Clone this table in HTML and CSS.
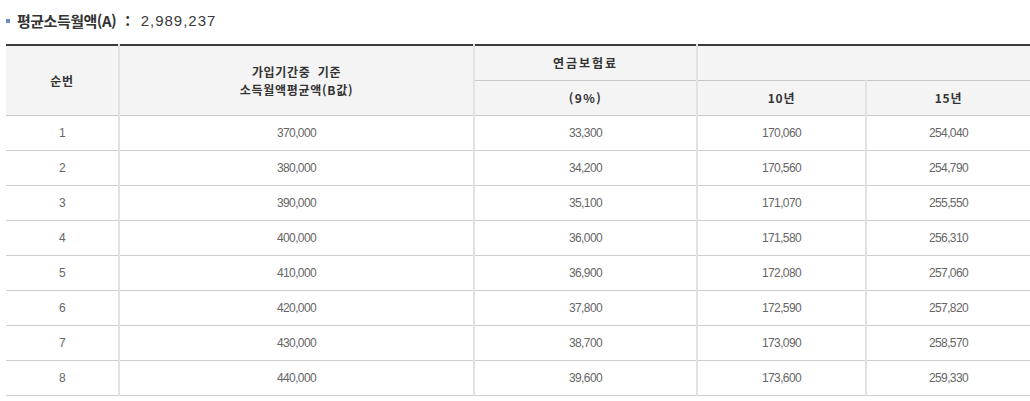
FILE: index.html
```html
<!DOCTYPE html>
<html lang="ko">
<head>
<meta charset="utf-8">
<link rel="stylesheet" href="styles.css">
</head>
<body>
<div class="page">
  <h3 class="title"><span class="bullet"></span><strong>평균소득월액(A)</strong><span class="colon">:</span><span class="value">2,989,237</span></h3>
  <table class="tbl">
    <colgroup>
      <col class="c1"><col class="c2"><col class="c3"><col class="c4"><col class="c5">
    </colgroup>
    <thead>
      <tr>
        <th rowspan="2">순번</th>
        <th rowspan="2"><span class="wide">가입기간중 기준</span><br>소득월액평균액(B값)</th>
        <th class="spaced">연금보험료</th>
        <th colspan="2"></th>
      </tr>
      <tr>
        <th class="sub">(9%)</th>
        <th>10년</th>
        <th>15년</th>
      </tr>
    </thead>
    <tbody>
      <tr><td>1</td><td>370,000</td><td>33,300</td><td>170,060</td><td>254,040</td></tr>
      <tr><td>2</td><td>380,000</td><td>34,200</td><td>170,560</td><td>254,790</td></tr>
      <tr><td>3</td><td>390,000</td><td>35,100</td><td>171,070</td><td>255,550</td></tr>
      <tr><td>4</td><td>400,000</td><td>36,000</td><td>171,580</td><td>256,310</td></tr>
      <tr><td>5</td><td>410,000</td><td>36,900</td><td>172,080</td><td>257,060</td></tr>
      <tr><td>6</td><td>420,000</td><td>37,800</td><td>172,590</td><td>257,820</td></tr>
      <tr><td>7</td><td>430,000</td><td>38,700</td><td>173,090</td><td>258,570</td></tr>
      <tr><td>8</td><td>440,000</td><td>39,600</td><td>173,600</td><td>259,330</td></tr>
    </tbody>
  </table>
</div>
</body>
</html>
```

FILE: styles.css
```css
html, body {
  margin: 0;
  padding: 0;
  background: #fff;
}
.page {
  padding: 0 0 0 6px;
  width: 1024px;
  font-family: "Noto Sans CJK KR", "Liberation Sans", sans-serif;
  color: #333;
}
.title {
  margin: 0;
  height: 44px;
  display: flex;
  align-items: center;
  padding-bottom: 4px;
  box-sizing: border-box;
  font-size: 15px;
  font-weight: normal;
  color: #333;
  letter-spacing: -0.5px;
}
.bullet {
  width: 4px;
  height: 4px;
  background: #6f8dba;
  margin: 1px 7px 0 0;
}
.title strong {
  font-weight: bold;
}
.colon {
  font-weight: bold;
  margin: 0 11px 0 9px;
}
.value {
  font-family: "Liberation Sans", sans-serif;
  letter-spacing: 1px;
  color: #3a3a3a;
}
.tbl {
  width: 1024px;
  border-collapse: collapse;
  table-layout: fixed;
  border-top: 2px solid #3a3a3a;
}
.c1 { width: 113px; }
.c2 { width: 355px; }
.c3 { width: 223px; }
.c4 { width: 169px; }
.c5 { width: 164px; }
.tbl th {
  background: #f4f4f4;
  height: 34px;
  padding: 0;
  font-size: 12px;
  font-weight: bold;
  color: #333;
  line-height: 18px;
  letter-spacing: 0.7px;
  border-bottom: 1px solid #c8c8c8;
  border-left: 2px solid #e2e2e2;
}
.tbl th .wide { word-spacing: 3px; }
.tbl th.spaced { letter-spacing: 2px; }
.tbl th.sub { letter-spacing: 1.5px; }
.tbl td {
  height: 34px;
  padding: 0;
  text-align: center;
  font-family: "Liberation Sans", sans-serif;
  font-size: 12px;
  color: #666;
  letter-spacing: -0.6px;
  border-bottom: 1px solid #cfcfcf;
  border-left: 2px solid #e2e2e2;
}
.tbl tr > :first-child { border-left: none; }
.tbl thead tr:nth-child(2) th:first-child { border-left: 2px solid #e2e2e2; }
```
